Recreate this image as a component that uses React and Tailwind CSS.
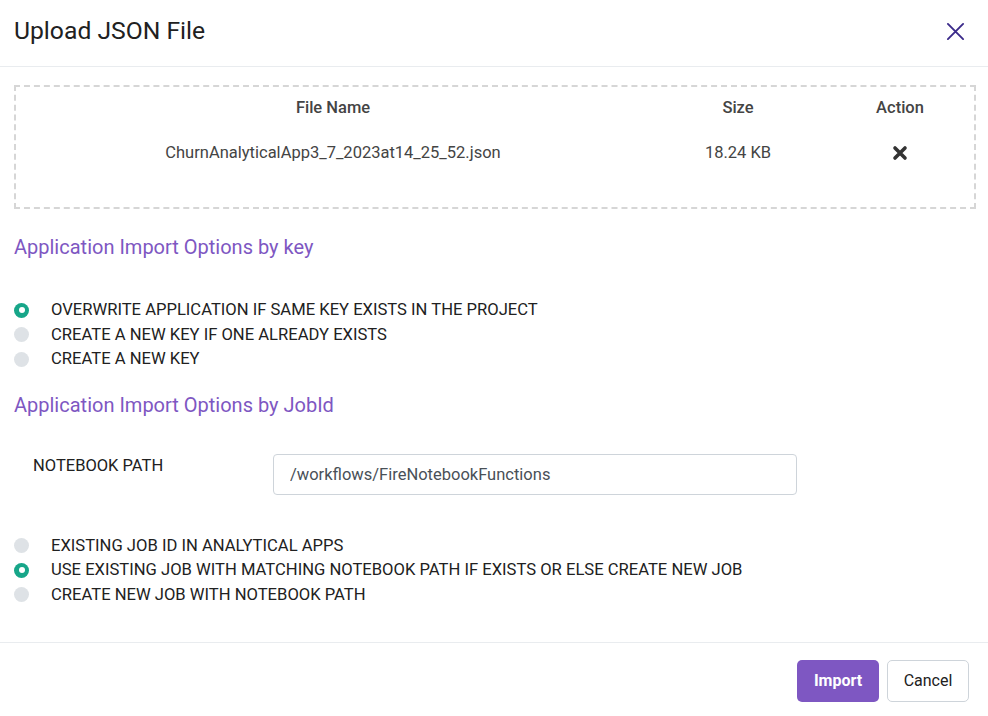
import React from 'react';

function Radio({ checked, label }) {
  return (
    <label className="flex items-center h-[24.5px]">
      <span
        className={`w-[15px] h-[15px] rounded-full flex items-center justify-center ${
          checked ? 'bg-[#17a689]' : 'bg-[#dee2e6]'
        }`}
      >
        {checked && <span className="w-[6px] h-[6px] rounded-full bg-white" />}
      </span>
      <span className="ml-[22px] text-[16.6px] leading-[24px] text-[#212121]">{label}</span>
    </label>
  );
}

export default function App() {
  return (
    <div className="w-[988px] h-[716px] bg-white flex flex-col" style={{ fontFamily: 'Roboto, "Liberation Sans", sans-serif' }}>
      <div className="h-[67px] flex items-center justify-between px-[14px] border-b border-[#e9ecef] shrink-0">
        <h1 className="text-[24.7px] leading-[32px] text-[#212121] -mt-[4px]">Upload JSON File</h1>
        <button className="text-[#3b2a8a] mr-[9px] -mt-[4px]">
          <svg width="19" height="19" viewBox="0 0 20 20" fill="none" stroke="currentColor" strokeWidth="2" strokeLinecap="round">
            <path d="M2 2L18 18M18 2L2 18" />
          </svg>
        </button>
      </div>

      <div className="flex-1 pl-[14px] pr-[12px]">
        <div className="mt-[18px] h-[124px] border-2 border-dashed border-[#d6d6d6] text-[16.5px] leading-[24px] text-[#444]">
          <div className="grid grid-cols-[634px_176px_1fr] pt-[9px]">
            <div className="text-center font-medium text-[#444]">File Name</div>
            <div className="text-center font-medium text-[#444]">Size</div>
            <div className="text-center font-medium text-[#444]">Action</div>
          </div>
          <div className="grid grid-cols-[634px_176px_1fr] mt-[21px] items-center">
            <div className="text-center">ChurnAnalyticalApp3_7_2023at14_25_52.json</div>
            <div className="text-center">18.24 KB</div>
            <div className="flex justify-center">
              <svg width="16" height="16" viewBox="0 0 16 16">
                <path d="M3 3L13 13M13 3L3 13" stroke="#333" strokeWidth="3.6" strokeLinecap="round" />
              </svg>
            </div>
          </div>
        </div>

        <h2 className="mt-[24px] text-[20px] leading-[28px] text-[#7e57c2]">Application Import Options by key</h2>

        <div className="mt-[37px] flex flex-col">
          <Radio checked label="OVERWRITE APPLICATION IF SAME KEY EXISTS IN THE PROJECT" />
          <Radio label="CREATE A NEW KEY IF ONE ALREADY EXISTS" />
          <Radio label="CREATE A NEW KEY" />
        </div>

        <h2 className="mt-[19px] text-[20px] leading-[28px] text-[#7e57c2]">Application Import Options by JobId</h2>

        <div className="mt-[35px] flex items-start">
          <div className="w-[259px] pl-[19px] text-[16.5px] leading-[24px] text-[#212121]">NOTEBOOK PATH</div>
          <input
            readOnly
            value="/workflows/FireNotebookFunctions"
            className="w-[524px] h-[41px] border border-[#ced4da] rounded-[4px] px-[16px] text-[16.5px] text-[#495057] outline-none"
          />
        </div>

        <div className="mt-[39px] flex flex-col">
          <Radio label="EXISTING JOB ID IN ANALYTICAL APPS" />
          <Radio checked label="USE EXISTING JOB WITH MATCHING NOTEBOOK PATH IF EXISTS OR ELSE CREATE NEW JOB" />
          <Radio label="CREATE NEW JOB WITH NOTEBOOK PATH" />
        </div>
      </div>

      <div className="h-[74px] border-t border-[#e9ecef] flex items-center justify-end gap-[8px] pr-[19px] pt-[2px] shrink-0">
        <button className="w-[82px] h-[42px] rounded-[5px] bg-[#7e57c2] text-white font-bold text-[16px]">Import</button>
        <button className="w-[82px] h-[42px] rounded-[5px] border border-[#ced4da] bg-white text-[#212121] text-[16px]">Cancel</button>
      </div>
    </div>
  );
}
